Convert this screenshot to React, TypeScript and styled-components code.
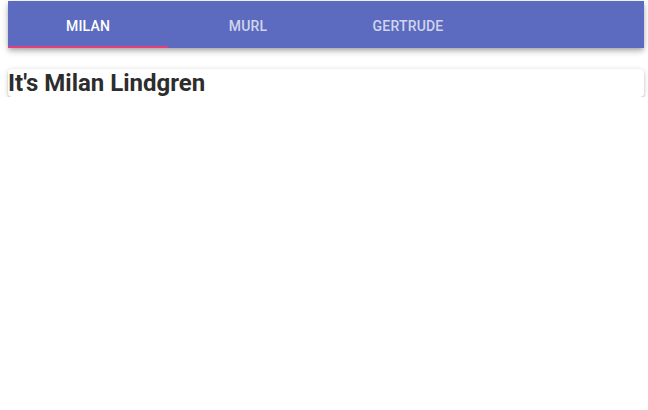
import React, { useState } from 'react';
import styled, { createGlobalStyle } from 'styled-components';

const people = [
  { key: 'milan', label: 'Milan', name: 'Milan Lindgren' },
  { key: 'murl', label: 'Murl', name: 'Murl Hessel' },
  { key: 'gertrude', label: 'Gertrude', name: 'Gertrude Kuhn' },
];

const App: React.FC = () => {
  const [active, setActive] = useState(0);

  return (
    <>
      <GlobalStyle />
      <Page>
        <AppBar>
          <TabList>
            {people.map((p, i) => (
              <Tab key={p.key} $selected={i === active} onClick={() => setActive(i)}>
                {p.label}
              </Tab>
            ))}
          </TabList>
        </AppBar>
        <Card>
          <Heading>It's {people[active].name}</Heading>
        </Card>
      </Page>
    </>
  );
};

export default App;

const GlobalStyle = createGlobalStyle`
  html, body {
    margin: 0;
    background: #fff;
  }
  body {
    font-family: Roboto, "Liberation Sans", sans-serif;
  }
`;

const Page = styled.div`
  padding: 1px 4px 0 8px;
  display: flex;
  flex-direction: column;
  gap: 21px;
`;

const AppBar = styled.header`
  background: #5c6bc0;
  height: 47px;
  box-shadow: 0 2px 4px -1px rgba(0, 0, 0, 0.2), 0 4px 5px 0 rgba(0, 0, 0, 0.14),
    0 1px 10px 0 rgba(0, 0, 0, 0.12);
`;

const TabList = styled.div`
  display: flex;
  height: 100%;
`;

const Tab = styled.button<{ $selected: boolean }>`
  width: 160px;
  height: 100%;
  border: 0;
  background: transparent;
  padding: 4px 0 0;
  font-family: Roboto, "Liberation Sans", sans-serif;
  font-size: 14px;
  font-weight: 500;
  letter-spacing: 0.2px;
  text-transform: uppercase;
  color: ${(p) => (p.$selected ? '#fff' : 'rgba(255, 255, 255, 0.72)')};
  border-bottom: 2px solid ${(p) => (p.$selected ? '#e2407a' : 'transparent')};
  cursor: pointer;
`;

const Card = styled.div`
  background: #fff;
  border-radius: 4px;
  box-shadow: 0 1px 5px 0 rgba(0, 0, 0, 0.2), 0 2px 2px 0 rgba(0, 0, 0, 0.14),
    0 3px 1px -2px rgba(0, 0, 0, 0.12);
`;

const Heading = styled.h2`
  margin: 0;
  height: 28px;
  font-size: 24px;
  line-height: 28px;
  font-weight: 700;
  color: #2d2d2d;
`;
